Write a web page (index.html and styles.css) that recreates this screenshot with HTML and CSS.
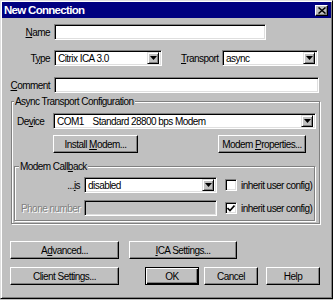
FILE: index.html
```html
<!DOCTYPE html>
<html>
<head>
<meta charset="utf-8">
<link rel="stylesheet" href="styles.css">
</head>
<body>
<div class="window">
  <div class="titlebar">
    <span class="title">New Connection</span>
    <span class="close"><svg width="8" height="7" viewBox="0 0 8 7"><path d="M0.5 0.5 L7.5 6.5 M7.5 0.5 L0.5 6.5" stroke="#000" stroke-width="1.5"/></svg></span>
  </div>
  <div class="row row-name">
    <span class="lbl"><u>N</u>ame</span>
    <span class="field w-name"></span>
  </div>
  <div class="row row-type">
    <span class="lbl">T<u>y</u>pe</span>
    <span class="field select w-type"><span class="val">Citrix ICA 3.0</span><span class="drop"><svg width="7" height="4" viewBox="0 0 7 4"><path d="M0 0 H7 L3.5 4 Z" fill="#000"/></svg></span></span>
    <span class="lbl2"><u>T</u>ransport</span>
    <span class="field select w-transport"><span class="val">async</span><span class="drop"><svg width="7" height="4" viewBox="0 0 7 4"><path d="M0 0 H7 L3.5 4 Z" fill="#000"/></svg></span></span>
  </div>
  <div class="row row-comment">
    <span class="lbl"><u>C</u>omment</span>
    <span class="field w-comment"></span>
  </div>
  <div class="group outer">
    <span class="legend">Async Transport Configuration</span>
    <div class="grow row-device">
      <span class="lbl-dev">De<u>v</u>ice</span>
      <span class="field select w-device"><span class="val">COM1&nbsp;&nbsp;&nbsp;&nbsp;Standard 28800 bps Modem</span><span class="drop"><svg width="7" height="4" viewBox="0 0 7 4"><path d="M0 0 H7 L3.5 4 Z" fill="#000"/></svg></span></span>
    </div>
    <div class="grow row-mbtns">
      <span class="btn w-install">Install&nbsp;<u>M</u>odem...</span>
      <span class="btn w-props">Modem&nbsp;<u>P</u>roperties...</span>
    </div>
    <div class="group inner">
      <span class="legend">Modem Call<u>b</u>ack</span>
      <div class="grow row-is">
        <span class="lbl-cb">...<u>i</u>s</span>
        <span class="field select w-cb"><span class="val">disabled</span><span class="drop"><svg width="7" height="4" viewBox="0 0 7 4"><path d="M0 0 H7 L3.5 4 Z" fill="#000"/></svg></span></span>
        <span class="check"></span>
        <span class="chk-text">inherit user config)</span>
      </div>
      <div class="grow row-phone">
        <span class="lbl-cb disabled">Phone number</span>
        <span class="field disabled-field w-cb"></span>
        <span class="check"><svg width="8" height="7" viewBox="0 0 8 7"><path d="M0.5 3 L3 5.5 L7.5 0.5" stroke="#000" stroke-width="1.6" fill="none"/></svg></span>
        <span class="chk-text">inherit user config)</span>
      </div>
    </div>
  </div>
  <div class="row row-b1">
    <span class="btn w-adv">A<u>d</u>vanced...</span>
    <span class="btn w-ica"><u>I</u>CA Settings...</span>
  </div>
  <div class="row row-b2">
    <span class="btn w-adv">Client Settin<u>g</u>s...</span>
    <span class="btn default w-sm ok">OK</span>
    <span class="btn w-sm cancel">Cancel</span>
    <span class="btn w-sm help">Help</span>
  </div>
</div>
</body>
</html>
```
FILE: styles.css
```css
* { box-sizing: border-box; }
html, body { margin: 0; padding: 0; }
body {
  width: 333px;
  height: 300px;
  overflow: hidden;
  background: #c0c0c0;
  font-family: "Liberation Sans", Arial, sans-serif;
  font-size: 10px;
  letter-spacing: -0.55px;
  color: #000;
}
u { text-decoration: underline; text-underline-offset: 1px; }

.window {
  width: 333px;
  height: 299px;
  border: 1px solid;
  border-color: #dfdfdf #000 #000 #dfdfdf;
  box-shadow: inset 1px 1px #fff, inset -1px -1px #808080;
  padding: 1px;
  background: #c0c0c0;
}
.titlebar {
  height: 16px;
  background: #000080;
  color: #fff;
  display: flex;
  align-items: center;
  justify-content: space-between;
  padding: 0 3px 0 2px;
}
.title { font-weight: bold; font-size: 11.5px; letter-spacing: -0.7px; }
.close {
  width: 13px;
  height: 11px;
  background: #c0c0c0;
  border: 1px solid;
  border-color: #fff #000 #000 #fff;
  box-shadow: inset -1px -1px #808080;
  display: flex;
  align-items: center;
  justify-content: center;
}

.row { display: flex; align-items: center; white-space: nowrap; }
.grow { display: flex; align-items: center; white-space: nowrap; }
.lbl { width: 48px; text-align: right; margin-right: 4px; }
.row-name { margin-top: 6px; }
.row-type { margin-top: 10px; }
.row-comment { margin-top: 11px; }

.field {
  height: 16px;
  background: #fff;
  border: 1px solid;
  border-color: #808080 #fff #fff #808080;
  box-shadow: inset 1px 1px #000, inset -1px -1px #dfdfdf;
  padding: 2px;
  display: flex;
  align-items: center;
  white-space: nowrap;
}
.val { flex: 1; padding-left: 1px; overflow: hidden; }
.drop {
  width: 12px;
  height: 12px;
  background: #c0c0c0;
  border: 1px solid;
  border-color: #dfdfdf #000 #000 #dfdfdf;
  box-shadow: inset 1px 1px #fff, inset -1px -1px #808080;
  display: flex;
  align-items: center;
  justify-content: center;
}
.w-name { width: 212px; }
.w-type { width: 108px; }
.lbl2 { margin-left: 19px; width: 41px; }
.w-transport { width: 96px; }
.w-comment { width: 265px; }

.group {
  position: relative;
  border: 1px solid #808080;
  box-shadow: inset 1px 1px #fff, 1px 1px #fff;
}
.legend {
  position: absolute;
  top: -7px;
  left: 2px;
  padding: 0 1px;
  background: #c0c0c0;
  line-height: 13px;
  white-space: nowrap;
}
.outer {
  margin: 8px 0 0 9px;
  width: 309px;
  height: 123px;
  padding: 0 0 0 5px;
}
.row-device { margin-top: 11px; }
.lbl-dev { width: 36px; }
.w-device { width: 263px; }
.row-mbtns { margin-top: 6px; }
.w-install { margin-left: 36px; width: 85px; height: 17px; }
.w-props { margin-left: 80px; width: 88px; height: 17px; }

.inner {
  margin: 13px 0 0 -3px;
  width: 301px;
  height: 55px;
}
.inner .legend { left: 4px; }
.row-is { margin-top: 10px; }
.row-phone { margin-top: 7px; }
.lbl-cb { width: 65px; text-align: right; margin-right: 4px; }
.disabled { color: #808080; text-shadow: 1px 1px #fff; }
.w-cb { width: 133px; }
.disabled-field { background: #c0c0c0; }
.check {
  margin-left: 8px;
  width: 12px;
  height: 12px;
  background: #fff;
  border: 1px solid;
  border-color: #808080 #fff #fff #808080;
  box-shadow: inset 1px 1px #000, inset -1px -1px #dfdfdf;
  display: flex;
  align-items: center;
  justify-content: center;
}
.chk-text { margin-left: 4px; }

.btn {
  height: 18px;
  background: #c0c0c0;
  border: 1px solid;
  border-color: #fff #000 #000 #fff;
  box-shadow: inset -1px -1px #808080;
  display: flex;
  align-items: center;
  justify-content: center;
  white-space: nowrap;
}
.row-b1 { margin-top: 17px; padding-left: 8px; }
.row-b2 { margin-top: 8px; padding-left: 8px; }
.w-adv { width: 109px; }
.w-ica { width: 108px; margin-left: 10px; }
.w-sm { width: 54px; }
.ok { margin-left: 26px; }
.cancel { margin-left: 5px; }
.help { margin-left: 8px; }
.default {
  border-color: #000;
  box-shadow: inset 1px 1px #fff, inset -1px -1px #000, inset -2px -2px #808080;
}
```
